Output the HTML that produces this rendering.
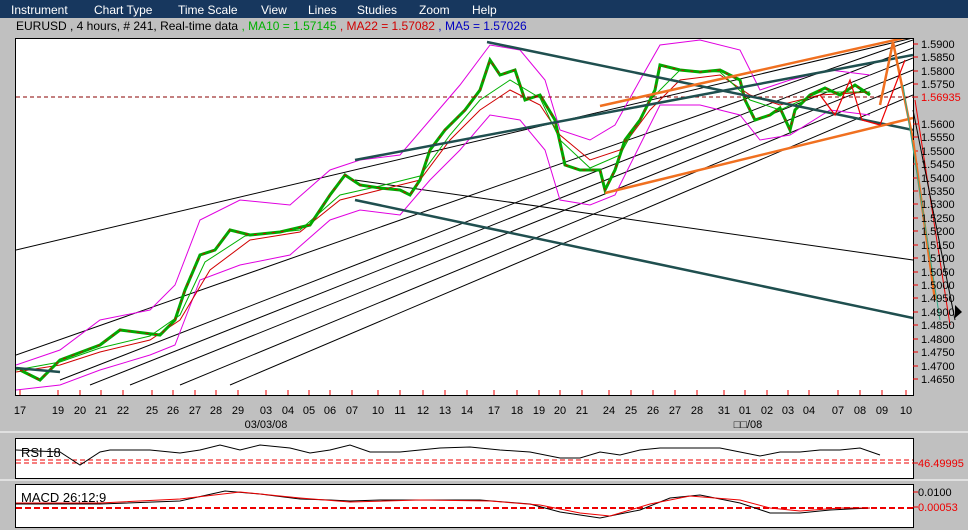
<!DOCTYPE html>
<html><head><style>
body{margin:0;width:968px;height:530px;background:#c0c0c0;overflow:hidden;font-family:"Liberation Sans",sans-serif;position:relative}
.menu{position:absolute;left:0;top:0;width:968px;height:18px;background:#17375e;color:#fff;font-size:12px}
.menu span{position:absolute;top:3px}
.title{position:absolute;left:16px;top:19px;font-size:12px;color:#000;white-space:nowrap}
svg{position:absolute;left:0;top:0}
</style></head><body>
<div class="menu"><span style="left:11px">Instrument</span><span style="left:94px">Chart Type</span><span style="left:178px">Time Scale</span><span style="left:261px">View</span><span style="left:308px">Lines</span><span style="left:357px">Studies</span><span style="left:419px">Zoom</span><span style="left:472px">Help</span></div>
<div class="title">EURUSD , 4 hours, # 241, Real-time data <span style="color:#00b000">, MA10 = 1.57145</span> <span style="color:#d00000">, MA22 = 1.57082</span> <span style="color:#0000c0">, MA5 = 1.57026</span></div>
<svg width="968" height="530" viewBox="0 0 968 530" font-family="Liberation Sans, sans-serif" font-size="11">
<rect x="15.5" y="38.5" width="898" height="357" fill="#fff" stroke="#000"/>
<rect x="15.5" y="438.5" width="898" height="40" fill="#fff" stroke="#000"/>
<rect x="15.5" y="484.5" width="898" height="43" fill="#fff" stroke="#000"/>
<line x1="0" y1="432" x2="968" y2="432" stroke="#fff"/>
<line x1="0" y1="480" x2="968" y2="480" stroke="#fff"/>
<clipPath id="c"><rect x="16" y="39" width="897" height="356"/></clipPath>
<g clip-path="url(#c)">
<g stroke="#000" stroke-width="1" fill="none">
<line x1="16" y1="250" x2="913" y2="38"/>
<line x1="16" y1="355" x2="913" y2="40"/>
<line x1="60" y1="380" x2="913" y2="48"/>
<line x1="90" y1="385" x2="913" y2="58"/>
<line x1="130" y1="385" x2="913" y2="70"/>
<line x1="180" y1="385" x2="913" y2="82"/>
<line x1="230" y1="385" x2="913" y2="95"/>
<line x1="355" y1="180" x2="913" y2="260"/>
</g>
<g stroke="#e000e0" fill="none">
<polyline points="16,365 60,350 100,320 150,310 175,285 200,220 240,200 290,205 330,170 360,160 400,155 430,120 460,85 490,45 520,50 545,80 560,130 590,140 615,125 640,80 660,45 700,40 740,50 760,90 790,80 830,70 870,75"/>
<polyline points="16,390 60,385 100,370 150,355 175,345 200,280 240,265 290,255 330,220 360,210 400,215 430,180 460,150 490,115 520,120 545,150 560,200 590,205 615,195 640,145 660,105 700,105 740,115 760,140 790,135 830,110 870,115"/>
</g>
<polyline fill="none" stroke="#d00000" points="16,372 60,365 100,352 150,340 180,320 210,270 250,240 300,232 340,200 380,190 420,180 450,140 480,110 510,90 540,105 560,135 590,160 620,150 650,110 680,80 720,75 750,95 780,105 820,95 870,92"/>
<polyline fill="none" stroke="#00b000" points="16,370 60,362 100,348 150,336 180,315 205,262 245,236 300,230 340,195 380,186 420,176 450,135 480,100 510,80 540,98 560,140 590,168 620,155 650,100 680,70 720,72 750,100 780,110 820,92 870,92"/>
<polyline fill="none" stroke="#0a0" stroke-width="3" points="20,370 40,380 60,360 100,345 120,330 160,335 175,320 185,290 200,255 215,250 230,230 250,235 280,232 310,225 330,195 345,175 360,185 380,188 400,190 410,195 420,180 430,150 445,130 465,110 480,90 490,60 500,75 515,70 525,100 540,95 555,120 565,165 580,170 600,170 605,190 615,170 625,140 640,120 655,90 660,65 680,70 700,72 720,70 740,80 745,100 755,120 770,115 780,108 790,130 795,110 810,95 825,88 840,95 855,85 870,95"/>
<polyline fill="none" stroke="#c00" stroke-width="1" stroke-dasharray="3 6" points="20,370 40,380 60,360 100,345 120,330 160,335 175,320 185,290 200,255 215,250 230,230 250,235 280,232 310,225 330,195 345,175 360,185 380,188 400,190 410,195 420,180 430,150 445,130 465,110 480,90 490,60 500,75 515,70 525,100 540,95 555,120 565,165 580,170 600,170 605,190 615,170 625,140 640,120 655,90 660,65 680,70 700,72 720,70 740,80 745,100 755,120 770,115 780,108 790,130 795,110 810,95 825,88 840,95 855,85 870,95"/>
<line x1="16" y1="97" x2="913" y2="97" stroke="#800" stroke-dasharray="4 3"/>
<g stroke="#1f4f4f" stroke-width="2.5">
<line x1="487" y1="42" x2="913" y2="130"/>
<line x1="355" y1="160" x2="913" y2="55"/>
<line x1="355" y1="200" x2="913" y2="318"/>
<line x1="16" y1="368" x2="60" y2="372"/>
</g>
<g stroke="#f07020" stroke-width="2.5">
<line x1="605" y1="193" x2="913" y2="118"/>
<line x1="600" y1="106" x2="913" y2="36"/>
<polyline fill="none" points="880,105 893,42 913,140"/>
</g>
<g stroke="#e00" fill="none" stroke-width="1.2">
<polyline points="820,95 835,115 850,80 862,120 880,125 905,60"/>
</g>
</g>
<g stroke="#e00"><path d="M20 395v-5M58 395v-5M80 395v-5M101 395v-5M123 395v-5M152 395v-5M173 395v-5M195 395v-5M216 395v-5M238 395v-5M266 395v-5M288 395v-5M309 395v-5M330 395v-5M352 395v-5M378 395v-5M400 395v-5M423 395v-5M445 395v-5M467 395v-5M494 395v-5M517 395v-5M539 395v-5M560 395v-5M582 395v-5M609 395v-5M631 395v-5M653 395v-5M675 395v-5M697 395v-5M724 395v-5M745 395v-5M767 395v-5M788 395v-5M809 395v-5M838 395v-5M860 395v-5M882 395v-5M906 395v-5"/>
<path d="M913 44h5M913 57h5M913 71h5M913 84h5M913 97h5M913 124h5M913 137h5M913 151h5M913 164h5M913 178h5M913 191h5M913 204h5M913 218h5M913 231h5M913 245h5M913 258h5M913 272h5M913 285h5M913 298h5M913 312h5M913 325h5M913 339h5M913 352h5M913 366h5M913 379h5M913 463h5M913 492h5M913 507h5"/></g>
<g stroke="#f07020" stroke-width="2.5"><line x1="913" y1="140" x2="935" y2="300"/></g>
<line x1="915" y1="100" x2="950" y2="325" stroke="#e00"/>
<line x1="903" y1="85" x2="940" y2="320" stroke="#3a8"/>
<line x1="913" y1="110" x2="955" y2="320" stroke="#000"/>
<polygon points="955,305 962,312 955,318" fill="#000"/>
<g fill="#000" font-size="11">
<text x="921" y="48">1.5900</text><text x="921" y="61">1.5850</text><text x="921" y="75">1.5800</text><text x="921" y="88">1.5750</text>
<text x="921" y="101" fill="#e00">1.56935</text>
<text x="921" y="128">1.5600</text><text x="921" y="141">1.5550</text><text x="921" y="155">1.5500</text><text x="921" y="168">1.5450</text><text x="921" y="182">1.5400</text><text x="921" y="195">1.5350</text><text x="921" y="208">1.5300</text><text x="921" y="222">1.5250</text><text x="921" y="235">1.5200</text><text x="921" y="249">1.5150</text><text x="921" y="262">1.5100</text><text x="921" y="276">1.5050</text><text x="921" y="289">1.5000</text><text x="921" y="302">1.4950</text><text x="921" y="316">1.4900</text><text x="921" y="329">1.4850</text><text x="921" y="343">1.4800</text><text x="921" y="356">1.4750</text><text x="921" y="370">1.4700</text><text x="921" y="383">1.4650</text>
</g>
<g fill="#000" font-size="11" text-anchor="middle">
<text x="20" y="414">17</text><text x="58" y="414">19</text><text x="80" y="414">20</text><text x="101" y="414">21</text><text x="123" y="414">22</text><text x="152" y="414">25</text><text x="173" y="414">26</text><text x="195" y="414">27</text><text x="216" y="414">28</text><text x="238" y="414">29</text><text x="266" y="414">03</text><text x="288" y="414">04</text><text x="309" y="414">05</text><text x="330" y="414">06</text><text x="352" y="414">07</text><text x="378" y="414">10</text><text x="400" y="414">11</text><text x="423" y="414">12</text><text x="445" y="414">13</text><text x="467" y="414">14</text><text x="494" y="414">17</text><text x="517" y="414">18</text><text x="539" y="414">19</text><text x="560" y="414">20</text><text x="582" y="414">21</text><text x="609" y="414">24</text><text x="631" y="414">25</text><text x="653" y="414">26</text><text x="675" y="414">27</text><text x="697" y="414">28</text><text x="724" y="414">31</text><text x="745" y="414">01</text><text x="767" y="414">02</text><text x="788" y="414">03</text><text x="809" y="414">04</text><text x="838" y="414">07</text><text x="860" y="414">08</text><text x="882" y="414">09</text><text x="906" y="414">10</text>
<text x="266" y="428">03/03/08</text><text x="748" y="428">□□/08</text>
</g>
<text x="21" y="457" font-size="13">RSI 18</text>
<line x1="16" y1="460" x2="913" y2="460" stroke="#e00" stroke-dasharray="5 3"/>
<line x1="16" y1="463" x2="913" y2="463" stroke="#e00" stroke-dasharray="5 3"/>
<polyline fill="none" stroke="#000" points="16,450 60,452 80,465 100,452 110,450 130,450 150,450 180,453 200,450 220,445 240,450 260,445 290,448 310,453 330,450 350,445 370,452 400,452 420,450 440,448 470,447 500,450 530,452 560,458 580,458 600,452 620,455 640,450 660,448 690,448 720,448 740,452 760,456 780,452 800,452 820,450 840,450 860,448 880,455"/>
<text x="918" y="467" fill="#e00">46.49995</text>
<text x="21" y="502" font-size="13">MACD 26;12;9</text>
<line x1="16" y1="508" x2="913" y2="508" stroke="#e00" stroke-width="2" stroke-dasharray="6 3"/>
<polyline fill="none" stroke="#000" points="16,504 100,504 180,501 225,491 260,494 300,499 330,500 350,501 380,500 420,500 480,500 530,504 560,512 600,518 640,510 670,498 700,495 740,503 770,513 800,513 830,510 870,508"/>
<polyline fill="none" stroke="#e00" points="16,503 100,503 180,499 240,492 300,498 350,502 420,500 490,501 540,505 580,513 610,516 650,504 690,496 740,500 770,508 800,511 840,508 870,508"/>
<text x="918" y="496">0.0100</text>
<text x="918" y="511" fill="#e00">0.00053</text>
</svg>
</body></html>
